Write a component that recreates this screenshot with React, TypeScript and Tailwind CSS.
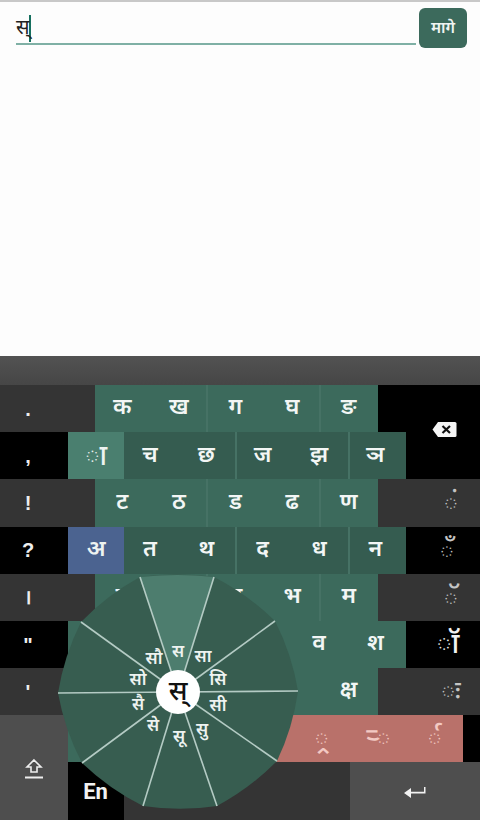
import React from 'react';

const FONT = "font-['Noto_Sans_Devanagari','Noto_Sans','Liberation_Sans',sans-serif]";

const DOTTED = '\u25CC';

const SPOKES: [number, number][] = [
  [214, 577], [275, 621], [298, 691], [277, 761], [217, 806],
  [143, 806], [82, 763], [58, 693], [81, 622], [140, 577],
];

const WHEEL_LABELS: [string, number, number][] = [
  ['स', 178, 653], ['सा', 203, 658], ['सि', 218, 681], ['सी', 218, 707], ['सु', 202, 731],
  ['सू', 179, 738], ['से', 153, 727], ['सै', 138, 706], ['सो', 138, 681], ['सौ', 154, 660],
];

const CX = 178;
const CY = 692;

// outline bulges a little between the spoke ends
const outline = () => {
  let d = `M${SPOKES[0][0]} ${SPOKES[0][1]}`;
  SPOKES.forEach((p, i) => {
    const next = SPOKES[(i + 1) % SPOKES.length];
    const mx = (p[0] + next[0]) / 2;
    const my = (p[1] + next[1]) / 2;
    const cx = CX + (mx - CX) * 1.05;
    const cy = CY + (my - CY) * 1.05;
    d += ` Q${cx} ${cy} ${next[0]} ${next[1]}`;
  });
  return d + 'Z';
};

interface RowProps {
  side: string;
  even?: boolean;
  plain?: boolean;
  blackRight?: boolean;
  first?: { label: string; className: string };
  keys: string[];
  right?: React.ReactNode;
}

const KeyRow = ({ side, even, plain, blackRight, first, keys, right }: RowProps) => (
  <div className="flex h-[47.2px]">
    <div className={`flex items-center justify-center text-[20px] font-bold text-[#eeeeee] ${even ? 'w-[68px] bg-black pr-[12px]' : 'w-[95px] bg-[#343434] pr-[39px]'}`}>
      <span className="font-['Liberation_Sans',sans-serif]">{side}</span>
    </div>
    <div className={`flex shrink-0 ${even ? 'w-[338px]' : 'w-[283px]'} ${even && !plain ? 'bg-[#355c50]' : 'bg-[#3c6a5c]'}`}>
      {first && (
        <div className={`flex w-[56.33px] shrink-0 items-center justify-center leading-none text-[#eef3f1] ${first.className}`}>
          {first.label}
        </div>
      )}
      {keys.map((k, i) => (
        <div
          key={`${k}-${i}`}
          className={`flex flex-1 items-center justify-center border-r-2 text-[23px] font-semibold text-[#f3f6f5] ${!plain && (i === 1 || i === 3) ? 'border-[#467265]' : 'border-transparent'} ${even ? 'pr-[3px]' : ''}`}
        >
          {k}
        </div>
      ))}
    </div>
    <div className={`flex flex-1 items-center justify-center text-[27px] font-medium leading-none text-[#c4c4c4] ${even || blackRight ? 'bg-black' : 'bg-[#343434]'}`}>
      {right}
    </div>
  </div>
);

const Wheel = () => (
  <svg className="absolute left-[50px] top-[565px] h-[250px] w-[260px]" viewBox="50 565 260 250">
    <path d={outline()} fill="#375d50" />
    <path d={`M${CX} ${CY} L140 577 Q178 573 214 577Z`} fill="#4d7d6e" />
    {SPOKES.map(([x, y]) => (
      <line key={`${x}-${y}`} x1={CX} y1={CY} x2={x} y2={y} stroke="#b4cbc4" strokeWidth="1.6" />
    ))}
    <circle cx={CX} cy={CY} r="22" fill="#ffffff" />
    <text x={CX} y={CY + 1} textAnchor="middle" dominantBaseline="central" fontSize="27" fontWeight="500" fill="#111111">स्</text>
    {WHEEL_LABELS.map(([t, x, y]) => (
      <text key={t} x={x} y={y} textAnchor="middle" dominantBaseline="central" fontSize="17" fontWeight="600" fill="#eef3f1">{t}</text>
    ))}
  </svg>
);

export default function App() {
  return (
    <div className={`${FONT} relative h-[820px] w-[480px] overflow-hidden bg-[#fdfdfd]`}>
      <div className="flex h-[356px] items-start border-t-2 border-[#c8c8c8] pl-4 pr-[13px] pt-[6px]">
        <div className="flex h-[37px] flex-1 items-end border-b-2 border-[#7fb0a5] text-[20px] leading-[30px] text-[#222222]">
          <span className="translate-y-[1px]">स्</span>
          <span className="mb-[1px] ml-[-1px] h-[27px] w-[2px] bg-[#16705f]" />
        </div>
        <button className="ml-[3px] h-10 w-12 rounded-md bg-[#3c6a5c] pt-[3px] text-[16px] font-semibold text-[#f0f4f2]">मागे</button>
      </div>

      <div className="h-[29px] bg-gradient-to-b from-[#525252] to-[#464646]" />

      <KeyRow side="." blackRight keys={['क', 'ख', 'ग', 'घ', 'ङ']} />
      <KeyRow
        side=","
        even
        first={{ label: `${DOTTED}ा`, className: 'bg-[#4a7f6f] pt-[4px] text-[28px] font-medium' }}
        keys={['च', 'छ', 'ज', 'झ', 'ञ']}
      />
      <KeyRow side="!" keys={['ट', 'ठ', 'ड', 'ढ', 'ण']} right={<span className="translate-y-[3px] pl-[44px]">{DOTTED}ं</span>} />
      <KeyRow
        side="?"
        even
        first={{ label: 'अ', className: 'bg-[#4b6390] text-[23px] font-semibold' }}
        keys={['त', 'थ', 'द', 'ध', 'न']}
        right={<span className="translate-y-[3px] pl-[8px]">{DOTTED}ँ</span>}
      />
      <KeyRow side="।" keys={['प', 'फ', 'ब', 'भ', 'म']} right={<span className="translate-y-[3px] pl-[44px]">{DOTTED}ॅ</span>} />
      <KeyRow
        side={'"'}
        even
        plain
        first={{ label: '', className: '' }}
        keys={['य', 'र', 'ल', 'व', 'श']}
        right={<span className="translate-y-[2px] pl-[10px] text-[29px] text-[#f2f2f2]">{DOTTED}ॉ</span>}
      />
      <KeyRow side="'" plain keys={['ष', 'स', 'ह', '', 'क्ष']} right={<span className="translate-y-[2px] pl-[44px]">{DOTTED}ः</span>} />

      <div className="flex h-[105.6px]">
        <div className="flex w-[68px] items-center justify-center bg-[#4e4e4e] pt-[2px]">
          <svg width="22" height="22" viewBox="0 0 22 22" fill="none" stroke="#eeeeee" strokeWidth="1.6">
            <path d="M11 2 L18 9 H14 V14 H8 V9 H4 Z" />
            <path d="M2 19.5 H20" strokeWidth="2" />
          </svg>
        </div>
        <div className="flex flex-1 flex-col">
          <div className="flex h-[47px]">
            <div className="flex w-[395px] bg-black">
              <div className="w-[169px] bg-[#3c6a5c]" />
              <div className="flex w-[226px] items-center justify-end bg-[#b9716a] text-[27px] font-medium leading-none text-[#f3c9c3]">
                <span className="flex w-[56.5px] translate-y-[2px] justify-center">{DOTTED}्र</span>
                <span className="flex w-[56.5px] translate-y-[2px] justify-center">र्‍{DOTTED}</span>
                <span className="flex w-[56.5px] translate-y-[2px] justify-center">र्{DOTTED}</span>
              </div>
            </div>
            <div className="flex-1 bg-black" />
          </div>
          <div className="flex flex-1">
            <div className="flex w-[56px] items-center justify-center bg-black pb-[1px] pr-[1px] font-['Roboto',sans-serif] text-[22px] font-bold text-[#f2f2f2]">En</div>
            <div className="w-[226px] bg-[#343434]" />
            <div className="flex flex-1 items-center justify-center bg-[#4e4e4e]">
              <svg width="22" height="12" viewBox="0 0 22 12" fill="#f2f2f2">
                <path d="M0 7 L7 2 V5.8 H20 V1 H21.5 V7.4 H7 V12 Z" />
              </svg>
            </div>
          </div>
        </div>
      </div>

      {/* backspace sits across the two black rows */}
      <svg className="absolute left-[432px] top-[421px] h-[17px] w-[25px]" viewBox="0 0 25 17">
        <path d="M6 1 H23 a1.5 1.5 0 0 1 1.5 1.5 V14.5 a1.5 1.5 0 0 1 -1.5 1.5 H6 L0.5 8.5Z" fill="#f5f5f5" />
        <path d="M10.5 5 L18 12 M18 5 L10.5 12" stroke="#111111" strokeWidth="2.2" />
      </svg>

      <Wheel />
    </div>
  );
}
